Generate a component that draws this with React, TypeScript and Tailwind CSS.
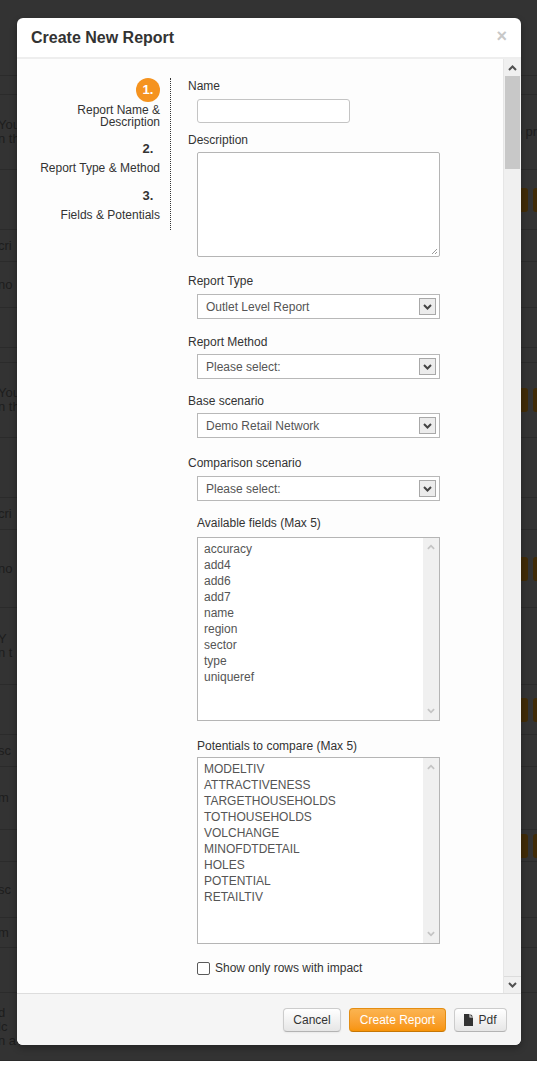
import React from "react";

const fields = ["accuracy", "add4", "add6", "add7", "name", "region", "sector", "type", "uniqueref"];
const potentials = [
  "MODELTIV",
  "ATTRACTIVENESS",
  "TARGETHOUSEHOLDS",
  "TOTHOUSEHOLDS",
  "VOLCHANGE",
  "MINOFDTDETAIL",
  "HOLES",
  "POTENTIAL",
  "RETAILTIV",
];

// faint page rows behind the backdrop
const bgRows: { h: string; left?: string[]; right?: string; orange?: boolean }[] = [
  { h: "h-[76px]" },
  { h: "h-[19px]" },
  { h: "h-[75px]", left: ["You", "n th"], right: "o pr" },
  { h: "h-[60px]", orange: true },
  { h: "h-[32px]", left: ["cri"] },
  { h: "h-[46px]", left: ["no"] },
  { h: "h-[40px]" },
  { h: "h-[15px]" },
  { h: "h-[75px]", left: ["You", "n th"], orange: true },
  { h: "h-[60px]" },
  { h: "h-[32px]", left: ["cri"] },
  { h: "h-[78px]", left: ["no"], orange: true },
  { h: "h-[77px]", left: ["Y", "n t"] },
  { h: "h-[50px]", orange: true },
  { h: "h-[32px]", left: ["sc"] },
  { h: "h-[63px]", left: ["m"] },
  { h: "h-[32px]", orange: true },
  { h: "h-[56px]", left: ["sc"] },
  { h: "h-[30px]", left: ["m"] },
  { h: "h-[45px]" },
  { h: "h-[68px]", left: ["d", "lc", "n a"] },
];

function Chevron({ up = false, color = "#444", w = 9 }: { up?: boolean; color?: string; w?: number }) {
  return (
    <svg width={w} height="6" viewBox="0 0 9 6" className={up ? "rotate-180" : ""}>
      <path d="M1 1l3.5 3.5L8 1" stroke={color} strokeWidth="2" fill="none" />
    </svg>
  );
}

function Select({ value, className }: { value: string; className: string }) {
  return (
    <div
      className={`ml-[9px] flex h-[25px] w-[243px] items-center justify-between border border-[#b8b8b8] bg-white pl-[8px] pr-[3px] text-[12px] text-[#555] ${className}`}
    >
      <span>{value}</span>
      <span className="flex h-[17px] w-[17px] items-center justify-center border border-[#a8a8a8] bg-[#ececec]">
        <Chevron />
      </span>
    </div>
  );
}

function ListBox({ items, className }: { items: string[]; className: string }) {
  return (
    <div className={`ml-[9px] flex w-[243px] border border-[#b5b5b5] bg-white ${className}`}>
      <div className="flex-1 pl-[6px] pt-[3px] text-[12px] leading-[16px] text-[#555]">
        {items.map((it) => (
          <div key={it}>{it}</div>
        ))}
      </div>
      <div className="flex w-[16px] flex-col items-center justify-between bg-[#f0f0f0] py-[6px]">
        <Chevron up color="#c4c4c4" w={8} />
        <Chevron color="#c4c4c4" w={8} />
      </div>
    </div>
  );
}

export default function App() {
  return (
    <div className="h-[1072px] w-[550px] bg-white font-['Liberation_Sans',Arial,sans-serif]">
      <div className="relative h-[1061px] w-[537px] overflow-hidden bg-[#333]">
        {/* Page behind the backdrop */}
        <div className="flex flex-col">
          {bgRows.map((r, i) => (
            <div
              key={i}
              className={`${r.h} flex items-center justify-between border-b border-[#2b2b2b] text-[13px] leading-[14px] text-[#1d1d1d]`}
            >
              <div className="-ml-[2px]">
                {r.left?.map((t) => (
                  <div key={t}>{t}</div>
                ))}
              </div>
              {r.orange ? (
                <div className="flex gap-[5px]">
                  <div className="h-[24px] w-[8px] rounded-r-[3px] bg-[#402b07]" />
                  <div className="h-[24px] w-[4px] rounded-l-[3px] bg-[#402b07]" />
                </div>
              ) : (
                <div className="text-[#1d1d1d]">{r.right}</div>
              )}
            </div>
          ))}
        </div>

        {/* Modal */}
        <div className="absolute left-[17px] top-[18px] flex h-[1027px] w-[504px] flex-col overflow-hidden rounded-[6px] bg-white shadow-[0_3px_7px_rgba(0,0,0,0.3)]">
          <div className="flex h-[41px] shrink-0 items-center justify-between border-b-2 border-[#eee] pl-[14px] pr-[14px]">
            <h3 className="text-[16px] font-bold text-[#333]">Create New Report</h3>
            <span className="-mt-[3px] text-[18px] font-bold leading-none text-[#c8c8c8]">×</span>
          </div>

          <div className="flex min-h-0 flex-1">
            <div className="flex flex-1 overflow-hidden bg-[#fdfdfd]">
              {/* Steps */}
              <div className="mt-[19px] w-[154px] self-start border-r border-dotted border-[#333] pb-[9px] pr-[10px] text-right text-[12px] leading-[12px] text-[#333]">
                <div className="flex justify-end">
                  <div className="flex h-[24px] w-[24px] items-center justify-center rounded-full bg-[#f5931f] text-[13px] font-bold text-white">
                    1.
                  </div>
                </div>
                <div className="mt-[2px]">
                  Report Name &amp;
                  <br />
                  Description
                </div>
                <div className="mt-[9px] flex justify-end">
                  <div className="flex h-[24px] w-[24px] items-center justify-center text-[13px] font-bold">2.</div>
                </div>
                <div className="mt-[1px]">Report Type &amp; Method</div>
                <div className="mt-[10px] flex justify-end">
                  <div className="flex h-[24px] w-[24px] items-center justify-center text-[13px] font-bold">3.</div>
                </div>
                <div className="mt-[1px]">Fields &amp; Potentials</div>
              </div>

              {/* Form */}
              <div className="flex flex-col pl-[17px] pt-[19px] text-[12px] leading-[16px] text-[#333]">
                <label>Name</label>
                <div className="ml-[9px] mt-[5px] h-[24px] w-[153px] rounded-[3px] border border-[#c4c4c4] bg-white" />

                <label className="mt-[9px]">Description</label>
                <div className="relative ml-[9px] mt-[4px] h-[105px] w-[243px] rounded-[2px] border border-[#b5b5b5] bg-white">
                  <svg width="7" height="7" viewBox="0 0 7 7" className="absolute bottom-[1px] right-[1px]">
                    <path d="M6 1L1 6M6 4L4 6" stroke="#9a9a9a" strokeWidth="1" />
                  </svg>
                </div>

                <label className="mt-[16px]">Report Type</label>
                <Select value="Outlet Level Report" className="mt-[5px]" />

                <label className="mt-[15px]">Report Method</label>
                <Select value="Please select:" className="mt-[4px]" />

                <label className="mt-[14px]">Base scenario</label>
                <Select value="Demo Retail Network" className="mt-[4px]" />

                <label className="mt-[17px]">Comparison scenario</label>
                <Select value="Please select:" className="mt-[5px]" />

                <label className="ml-[9px] mt-[14px]">Available fields (Max 5)</label>
                <ListBox items={fields} className="mt-[6px] h-[184px]" />

                <label className="ml-[9px] mt-[17px]">Potentials to compare (Max 5)</label>
                <ListBox items={potentials} className="mt-[3px] h-[187px]" />

                <div className="ml-[9px] mt-[16px] flex items-center gap-[5px]">
                  <span className="h-[13px] w-[13px] rounded-[2px] border border-[#5a5a5a] bg-white" />
                  <span>Show only rows with impact</span>
                </div>
              </div>
            </div>

            {/* Body scrollbar */}
            <div className="flex w-[18px] flex-col border-l border-[#e6e6e6] bg-[#f0f0f0]">
              <div className="flex h-[17px] items-center justify-center">
                <Chevron up color="#505050" w={9} />
              </div>
              <div className="mx-[1px] h-[93px] bg-[#c8c8c8]" />
              <div className="flex-1" />
              <div className="flex h-[17px] items-center justify-center border-t border-[#dcdcdc]">
                <Chevron color="#505050" w={9} />
              </div>
            </div>
          </div>

          {/* Footer */}
          <div className="flex h-[52px] shrink-0 items-center justify-end gap-[8px] border-t border-[#ddd] bg-[#f5f5f5] pr-[14px] text-[12px]">
            <button className="flex h-[24px] w-[58px] items-center justify-center rounded-[4px] border border-[#ccc] border-b-[#b3b3b3] bg-gradient-to-b from-white to-[#e6e6e6] text-[#333] shadow-[inset_0_1px_0_rgba(255,255,255,0.2),0_1px_2px_rgba(0,0,0,0.05)]">
              Cancel
            </button>
            <button className="flex h-[24px] w-[97px] items-center justify-center rounded-[4px] border border-[#e38d13] border-b-[#c67605] bg-gradient-to-b from-[#fbb450] to-[#f89406] text-white">
              Create Report
            </button>
            <button className="flex h-[24px] w-[53px] items-center justify-center gap-[5px] rounded-[4px] border border-[#ccc] border-b-[#b3b3b3] bg-gradient-to-b from-white to-[#e6e6e6] text-[#333]">
              <svg width="9" height="12" viewBox="0 0 9 12">
                <path d="M0 0H5.5V3.5H9V12H0Z" fill="#333" />
                <path d="M6.5 0L9 2.5H6.5Z" fill="#333" />
              </svg>
              Pdf
            </button>
          </div>
        </div>
      </div>
    </div>
  );
}
